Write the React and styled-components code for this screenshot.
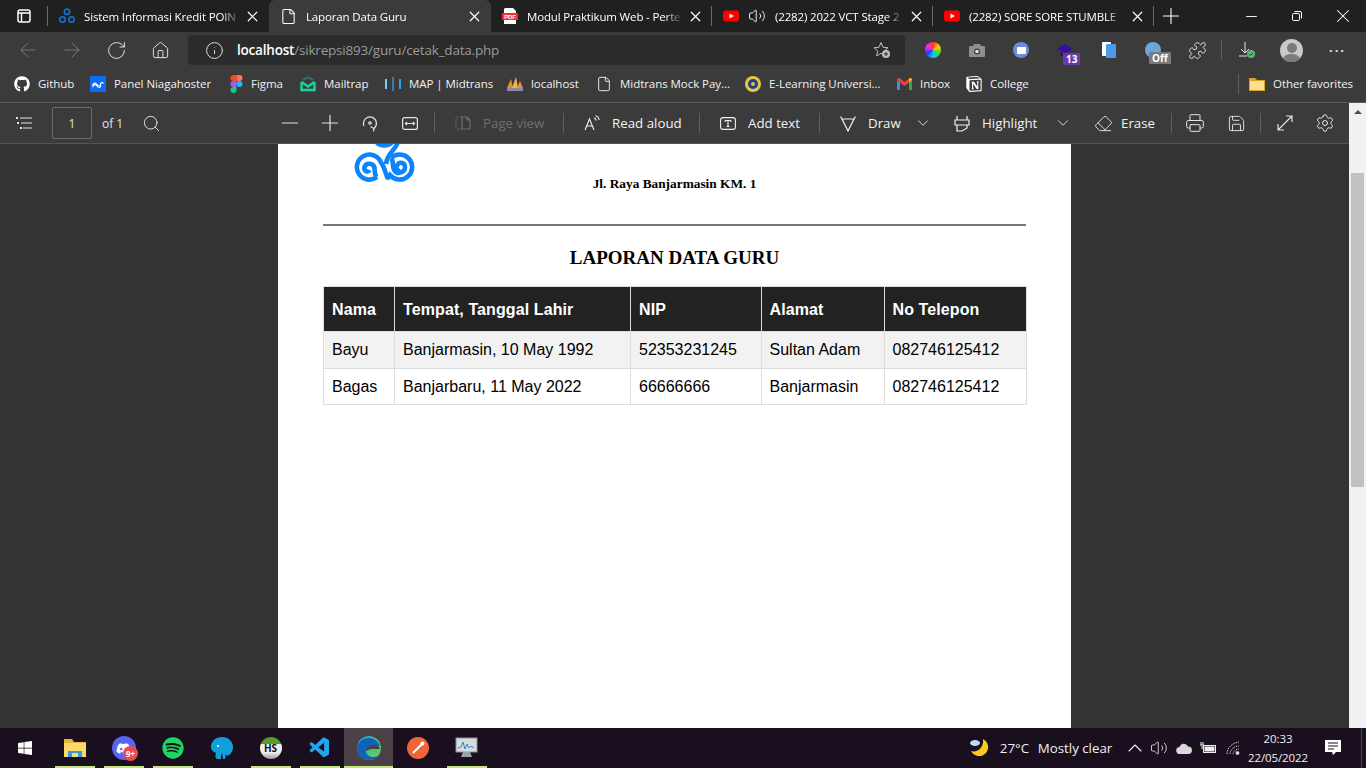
import React from 'react';
import styled, { createGlobalStyle } from 'styled-components';
import { FaGithub, FaDiscord, FaSpotify, FaWindows } from 'react-icons/fa';
import { SiNotion } from 'react-icons/si';
import { VscVscode } from 'react-icons/vsc';
import {
  ArrowLeft, ArrowRight, RotateCw, Home, Info, X, Plus, Minus, Search, Printer, Save, Settings,
  Eraser, Puzzle, ChevronDown, ChevronUp, File, Volume2,
} from 'lucide-react';

const GlobalStyle = createGlobalStyle`
  html, body { margin: 0; height: 100%; overflow: hidden; background: #333; }
  * { box-sizing: border-box; }
  body { font-family: "Open Sans", "Noto Sans", sans-serif; color: #fff; }
`;

const Screen = styled.div`
  width: 1366px;
  height: 768px;
  display: flex;
  flex-direction: column;
`;

/* ---- tab strip ---- */
const TabStrip = styled.div`
  height: 32px;
  flex: none;
  display: flex;
  background: #202020;
`;
const StripButton = styled.div`
  width: ${(p) => p.$w}px;
  flex: none;
  display: flex;
  align-items: center;
  justify-content: center;
  color: #fff;
`;
const WindowControls = styled.div`
  margin-left: auto;
  display: flex;
`;
const Tab = styled.div`
  width: ${(p) => p.$w}px;
  flex: none;
  display: flex;
  align-items: center;
  gap: 9px;
  padding: 0 8px 0 11px;
  font-size: 11.5px;
  letter-spacing: -0.15px;
  position: relative;
  background: ${(p) => (p.$active ? '#3b3b3b' : 'transparent')};
  border-radius: ${(p) => (p.$active ? '6px 6px 0 0' : '0')};
`;
const TabTitle = styled.span`
  flex: 1;
  min-width: 0;
  margin-right: -5px;
  overflow: hidden;
  white-space: nowrap;
  -webkit-mask-image: linear-gradient(to right, #000 calc(100% - 18px), transparent 100%);
  mask-image: linear-gradient(to right, #000 calc(100% - 18px), transparent 100%);
`;
const TabDivider = styled.span`
  position: absolute;
  right: 0;
  top: 6px;
  width: 1px;
  height: 20px;
  background: #6a6a6a;
`;
const StripSep = styled.div`
  width: 1px;
  height: 20px;
  margin-top: 6px;
  background: #6a6a6a;
  flex: none;
`;

/* ---- address toolbar ---- */
const AddressRow = styled.div`
  height: 36px;
  flex: none;
  display: flex;
  align-items: center;
  padding-left: 6px;
  background: #3b3b3b;
`;
const NavButton = styled.div`
  width: ${(p) => p.$w || 44}px;
  flex: none;
  display: flex;
  align-items: center;
  justify-content: center;
  color: ${(p) => (p.$dim ? '#777' : '#e6e6e6')};
  position: relative;
`;
const AddressBar = styled.div`
  width: 717px;
  height: 30px;
  margin: 0 6px;
  flex: none;
  display: flex;
  align-items: center;
  padding: 0 14px 0 17px;
  background: #2b2b2b;
  border-radius: 4px;
  font-size: 13.5px;
  letter-spacing: -0.2px;
  color: #e6e6e6;
`;
const Url = styled.div`
  margin-left: 13px;
  flex: 1;
  color: #9a9a9a;
  b { font-weight: 600; color: #fff; }
`;
const ToolSep = styled.div`
  width: 1px;
  height: 20px;
  flex: none;
  background: #5f5f5f;
  margin: 0 ${(p) => p.$r ?? 0}px 0 ${(p) => p.$l ?? 0}px;
`;
const Wheel = styled.div`
  width: 16px;
  height: 16px;
  border-radius: 50%;
  background: conic-gradient(#f33, #fc0, #3d3, #0cf, #33f, #e3e, #f33);
`;
const ExtCircle = styled.div`
  width: 16px;
  height: 16px;
  border-radius: 50%;
  background: ${(p) => p.$bg};
  display: flex;
  align-items: center;
  justify-content: center;
`;
const ExtGlyph = styled.div`
  width: 9px;
  height: 7px;
  background: #fff;
  border-radius: 1px;
`;
const CountBadge = styled.span`
  position: absolute;
  left: 20px;
  top: 9px;
  padding: 0 3px;
  height: 12px;
  line-height: 12px;
  font-size: 10px;
  font-weight: 700;
  border-radius: 1px;
  color: #fff;
  background: ${(p) => p.$bg};
`;
const OffBadge = styled(CountBadge)`
  left: 18px;
  top: 10px;
`;
const Avatar = styled.div`
  width: 23px;
  height: 23px;
  border-radius: 50%;
  background: #c9c9c9;
  overflow: hidden;
`;
const AvatarHead = styled.div`
  width: 10px;
  height: 10px;
  border-radius: 50%;
  background: #7b7b7b;
  margin: 4px auto 1px;
`;
const AvatarBody = styled.div`
  width: 17px;
  height: 10px;
  border-radius: 50%;
  background: #7b7b7b;
  margin: 0 auto;
`;
const MoreDots = styled.div`
  font-size: 13px;
  font-weight: 700;
  letter-spacing: 2px;
  line-height: 1;
  margin-top: -6px;
`;

/* ---- favorites bar ---- */
const FavBar = styled.div`
  height: 35px;
  flex: none;
  display: flex;
  align-items: center;
  padding: 0 0 3px 14px;
  background: #3b3b3b;
  border-bottom: 1px solid #5a5a5a;
`;
const Fav = styled.div`
  width: ${(p) => p.$w}px;
  flex: none;
  display: flex;
  align-items: center;
  gap: 8px;
  font-size: 11.5px;
  letter-spacing: -0.05px;
  white-space: nowrap;
  color: #f2f2f2;
`;
const FavEnd = styled.div`
  margin-left: auto;
  display: flex;
  align-items: center;
  gap: 10px;
`;

/* ---- main area ---- */
const Main = styled.div`
  flex: 1;
  min-height: 0;
  display: flex;
`;
const ViewerColumn = styled.div`
  flex: 1;
  min-width: 0;
  display: flex;
  flex-direction: column;
`;
const PdfBar = styled.div`
  height: 41px;
  flex: none;
  display: flex;
  align-items: center;
  padding-left: 4px;
  background: #3b3b3b;
  border-bottom: 1px solid #555;
  color: #e4e4e4;
`;
const PdfSlot = styled.div`
  width: ${(p) => p.$w}px;
  margin-left: ${(p) => p.$ml || 0}px;
  flex: none;
  display: flex;
  align-items: center;
  justify-content: center;
`;
const PageBox = styled.div`
  width: 40px;
  height: 32px;
  margin-left: 8px;
  flex: none;
  display: flex;
  align-items: center;
  justify-content: center;
  border: 1px solid #6c6c6c;
  border-radius: 2px;
  font-size: 12px;
`;
const PageCount = styled.div`
  width: 39px;
  flex: none;
  padding-left: 10px;
  font-size: 12px;
`;
const PdfAction = styled.div`
  width: ${(p) => p.$w}px;
  flex: none;
  display: flex;
  align-items: center;
  gap: ${(p) => p.$gap || 12}px;
  padding: 0 2px 0 20px;
  font-size: 13.3px;
  white-space: nowrap;
  color: ${(p) => (p.$dim ? '#6f6f6f' : '#f2f2f2')};
  svg { flex: none; }
`;
const ActionCaret = styled.span`
  margin-left: auto;
  display: flex;
`;
const Viewer = styled.div`
  flex: 1;
  min-height: 0;
  display: flex;
  justify-content: center;
  background: #333;
`;
const Sheet = styled.div`
  width: 793px;
  height: 100%;
  padding: 0 45px;
  background: #fff;
  color: #000;
  overflow: hidden;
`;
const SheetHeader = styled.div`
  display: grid;
  grid-template-columns: 1fr auto 1fr;
  align-items: end;
  height: 47px;
`;
const Logo = styled.svg`
  display: block;
  width: 64px;
  height: 38px;
  margin: 0 0 9px 30px;
`;
const Address = styled.div`
  font: 700 13.33px/14px "Liberation Serif", serif;
`;
const Rule = styled.hr`
  height: 2px;
  margin: 33px 0 0;
  border: 0;
  background: #777;
`;
const ReportTitle = styled.h1`
  margin: 21px 0 17px;
  text-align: center;
  font: 700 19px/22px "Liberation Serif", serif;
`;
const ReportTable = styled.table`
  width: 702.5px;
  border-collapse: collapse;
  table-layout: fixed;
  font: 16px/20px "Liberation Sans", Arial, sans-serif;
`;
const Th = styled.th`
  width: ${(p) => p.$w}px;
  height: 45px;
  padding: 2px 8px 0;
  text-align: left;
  font-weight: 700;
  letter-spacing: 0.1px;
  color: #fff;
  background: #222;
  border: 1px solid #ddd;
`;
const Row = styled.tr`
  background: ${(p) => (p.$shade ? '#f2f2f2' : '#fff')};
`;
const Td = styled.td`
  height: 36.5px;
  padding: ${(p) => (p.$low ? '2px' : '0')} 8px 0;
  border: 1px solid #ddd;
`;
const Scrollbar = styled.div`
  width: 17px;
  flex: none;
  background: #f1f1f1;
  padding: 0 2px;
`;
const ScrollArrow = styled.div`
  height: 70px;
  padding-top: 7px;
  display: flex;
  justify-content: center;
`;
const ArrowUp = styled.div`
  width: 0;
  height: 0;
  border-left: 4px solid transparent;
  border-right: 4px solid transparent;
  border-bottom: 4px solid #505050;
`;
const ScrollThumb = styled.div`
  height: 314px;
  background: #c1c1c1;
`;

/* ---- taskbar ---- */
const Taskbar = styled.div`
  height: 40px;
  flex: none;
  display: flex;
  align-items: stretch;
  background: #1a0f1e;
  color: #f0f0f0;
`;
const TaskSlot = styled.div`
  width: ${(p) => p.$w || 49}px;
  flex: none;
  display: flex;
  align-items: center;
  justify-content: center;
  position: relative;
  background: ${(p) => (p.$active ? '#4a4046' : 'transparent')};
  &::after {
    content: '';
    display: ${(p) => (p.$open ? 'block' : 'none')};
    position: absolute;
    bottom: 0;
    left: ${(p) => (p.$active ? 0 : 4.5)}px;
    right: ${(p) => (p.$active ? 0 : 4.5)}px;
    height: 2px;
    background: #c6e77e;
  }
`;
const DiscordDisc = styled.div`
  width: 24px;
  height: 24px;
  border-radius: 50%;
  background: #5865f2;
  display: flex;
  align-items: center;
  justify-content: center;
  color: #fff;
`;
const MentionBadge = styled.span`
  position: absolute;
  left: 24px;
  top: 18px;
  width: 15px;
  height: 15px;
  border-radius: 50%;
  background: #ec4a51;
  font-size: 8px;
  font-weight: 700;
  line-height: 15px;
  text-align: center;
  color: #fff;
`;
const HeidiDisc = styled.div`
  width: 22px;
  height: 22px;
  border-radius: 50%;
  background: linear-gradient(#5d9a2d 0 30%, #eee 30% 70%, #9a9a9a 100%);
  color: #111;
  font-size: 10px;
  font-weight: 700;
  line-height: 22px;
  text-align: center;
`;
const Tray = styled.div`
  margin-left: auto;
  display: flex;
  align-items: center;
  font-size: 13.3px;
`;
const TrayItem = styled.div`
  width: ${(p) => p.$w}px;
  padding-right: ${(p) => p.$pr || 0}px;
  flex: none;
  display: flex;
  align-items: center;
  justify-content: center;
  white-space: nowrap;
`;
const Clock = styled.div`
  width: 66px;
  flex: none;
  text-align: center;
  font-size: 11.5px;
  letter-spacing: -0.1px;
  line-height: 19px;
`;
const DesktopEdge = styled.div`
  width: 1px;
  height: 40px;
  margin: 0 4px 0 6px;
  background: #4a4046;
`;

const tabs = [
  { title: 'Sistem Informasi Kredit POIN', w: 221, icon: 'tri' },
  { title: 'Laporan Data Guru', w: 222, icon: 'doc', active: true },
  { title: 'Modul Praktikum Web - Perte', w: 221, icon: 'pdf', sep: true },
  { title: '(2282) 2022 VCT Stage 2', w: 221, icon: 'yt', audio: true, sep: true },
  { title: '(2282) SORE SORE STUMBLE', w: 221, icon: 'yt', sep: true },
];

const rows = [
  ['Bayu', 'Banjarmasin, 10 May 1992', '52353231245', 'Sultan Adam', '082746125412'],
  ['Bagas', 'Banjarbaru, 11 May 2022', '66666666', 'Banjarmasin', '082746125412'],
];

function TabIcon({ kind }) {
  if (kind === 'doc') return <File size={17} strokeWidth={1.5} />;
  if (kind === 'tri') return <TriIcon />;
  if (kind === 'pdf') return <PdfIcon />;
  return <YoutubeIcon />;
}

function TriIcon() {
  return (
    <svg width="16" height="16" viewBox="0 0 64 64" fill="none" stroke="#1274d6" strokeWidth="6">
      <circle cx="32" cy="15" r="11" />
      <circle cx="14" cy="46" r="11" />
      <circle cx="50" cy="46" r="11" />
      <path d="M32 15h1M14 46h1M50 46h1" />
    </svg>
  );
}
function PdfIcon() {
  return (
    <svg width="16" height="16" viewBox="0 0 16 16">
      <path d="M3 0h8l3 3v13H2V1z" fill="#fff" />
      <rect x="0" y="5" width="16" height="7" rx="1" fill="#f03030" />
      <text x="8" y="11" textAnchor="middle" fontSize="6" fontWeight="700" fill="#fff" fontFamily="Liberation Sans">PDF</text>
    </svg>
  );
}
function YoutubeIcon() {
  return (
    <svg width="16" height="16" viewBox="0 0 16 16">
      <rect y="2.5" width="16" height="11" rx="3" fill="#f00" />
      <path d="M6.5 5.5v5L11 8z" fill="#fff" />
    </svg>
  );
}
function NiagaIcon() {
  return (
    <svg width="16" height="16" viewBox="0 0 16 16" fill="none">
      <rect width="16" height="16" rx="1" fill="#0d6cf2" />
      <path d="M2.5 9.5c1.5-3 3-3 4.5-1s3 2 3.5 0 2-2.5 3-1M2.5 11c1.5-3 3-3 4.5-1s3 2 4 0" stroke="#fff" strokeWidth="1.2" />
    </svg>
  );
}
function FigmaIcon() {
  return (
    <svg width="13" height="18" viewBox="-.5 0 13 18">
      <path d="M6 0H3a3 3 0 0 0 0 6h3z" fill="#f24e1e" />
      <path d="M6 0h3a3 3 0 0 1 0 6H6z" fill="#ff7262" />
      <path d="M6 6H3a3 3 0 0 0 0 6h3z" fill="#a259ff" />
      <circle cx="9" cy="9" r="3" fill="#1abcfe" />
      <path d="M6 12H3a3 3 0 1 0 3 3z" fill="#0acf83" />
    </svg>
  );
}
function MailtrapIcon() {
  return (
    <svg width="16" height="16" viewBox="0 0 16 16" fill="none" strokeWidth="2.4">
      <path d="M1.5 6v8h13V6" stroke="#16d6a0" />
      <path d="M1.5 6 8 10.5 14.5 6" stroke="#16d6a0" />
      <path d="M2.5 4 8 1.5 13.5 4" stroke="#3d6470" />
    </svg>
  );
}
function BarsIcon() {
  return (
    <svg width="16" height="16" viewBox="0 0 16 16">
      <rect x="0" y="3" width="2" height="10" fill="#8cc8ec" />
      <rect x="7" y="1" width="2" height="14" fill="#2a7fc0" />
      <rect x="14" y="3" width="2" height="10" fill="#35a5e0" />
    </svg>
  );
}
function PmaIcon() {
  return (
    <svg width="16" height="16" viewBox="0 0 16 16">
      <path d="M0 12 4 3l2 9z" fill="#e8902a" />
      <path d="M5 12 9 1l2 11z" fill="#f2b544" />
      <path d="M10 12l3-7 3 7z" fill="#e8902a" />
      <rect x="0" y="12" width="16" height="3" fill="#8a8aa8" />
    </svg>
  );
}
function CampusIcon() {
  return (
    <svg width="16" height="16" viewBox="0 0 16 16">
      <circle cx="8" cy="8" r="8" fill="#e2c54a" />
      <circle cx="8" cy="8" r="5" fill="#25407a" />
      <circle cx="8" cy="8" r="2" fill="#d8c060" />
    </svg>
  );
}
function GmailIcon() {
  return (
    <svg width="15" height="12" viewBox="0 0 15 12">
      <path d="M0 2v10h3V4.5z" fill="#4285f4" />
      <path d="M15 2v10h-3V4.5z" fill="#34a853" />
      <path d="M0 2c0-2 2-2.5 3-1.5L7.5 4 12 .5c1-1 3-.5 3 1.5L12 4.5 7.5 8 3 4.5z" fill="#ea4335" />
      <path d="M12 .5c1-1 3-.5 3 1.5L12 4.5z" fill="#fbbc04" />
    </svg>
  );
}
function FolderIcon() {
  return (
    <svg width="16" height="14" viewBox="0 0 16 14">
      <path d="M0 1h6l2 2h8v11H0z" fill="#d9a520" />
      <rect x="1" y="4" width="14" height="9" fill="#fbe08c" />
    </svg>
  );
}
function PanelIcon() {
  return (
    <svg width="14" height="14" viewBox="0 0 14 14" fill="none" stroke="#fff" strokeWidth="1.5">
      <rect x="1" y="1" width="12" height="12" rx="2" />
      <path d="M1 4h12M4.5 4v9" />
    </svg>
  );
}
function RestoreIcon() {
  return (
    <svg width="10" height="10" viewBox="0 0 10 10" fill="none" stroke="#fff">
      <rect x=".5" y="2.5" width="7" height="7" rx="1" />
      <path d="M2.5 .5H8a1.5 1.5 0 0 1 1.5 1.5v5.5" />
    </svg>
  );
}
function StarAdd() {
  return (
    <svg width="18" height="18" viewBox="0 0 18 18" fill="none">
      <path d="M8 1.5 10 6.3l5 .4-3.8 3.3 1.2 5-4.4-2.7-4.4 2.7 1.2-5L1 6.7l5-.4z" stroke="#bdbdbd" />
      <circle cx="13" cy="13" r="4" fill="#bdbdbd" />
      <path d="M13 11v4M11 13h4" stroke="#2b2b2b" />
    </svg>
  );
}
function CameraIcon() {
  return (
    <svg width="16" height="15" viewBox="0 0 16 15">
      <path d="M5 1h6l1 2h3a1 1 0 0 1 1 1v9a1 1 0 0 1-1 1H1a1 1 0 0 1-1-1V4a1 1 0 0 1 1-1h3z" fill="#8f8f8f" />
      <circle cx="8" cy="8.5" r="3" fill="#3b3b3b" />
      <circle cx="8" cy="8.5" r="1.8" fill="#e6e6e6" />
    </svg>
  );
}
function ListIcon() {
  return (
    <svg width="16" height="12" viewBox="0 0 16 12" fill="#e4e4e4">
      <rect width="2" height="2" />
      <rect x="4" y=".5" width="12" height="1" />
      <rect x="1" y="5" width="2" height="2" />
      <rect x="5" y="5.5" width="11" height="1" />
      <rect x="4" y="10" width="2" height="2" />
      <rect x="7" y="10.5" width="9" height="1" />
    </svg>
  );
}
function RotateIcon() {
  return (
    <svg width="16" height="17" viewBox="0 0 16 17" fill="none" stroke="#e4e4e4" strokeWidth="1.2">
      <path d="M2 11A6.5 6.5 0 1 1 12 13.5" />
      <path d="M8.5 11.5 12 13.5 11.5 16.5" />
      <circle cx="8" cy="8" r="1.2" />
    </svg>
  );
}
function FitIcon() {
  return (
    <svg width="16" height="13" viewBox="0 0 16 13" fill="none" stroke="#e4e4e4" strokeWidth="1.2">
      <rect x=".6" y=".6" width="14.8" height="11.8" rx="2" />
      <path d="M3.5 6.5h9M5 5 3.5 6.5 5 8M11 5l1.5 1.5L11 8" />
    </svg>
  );
}
function PageViewIcon() {
  return (
    <svg width="16" height="16" viewBox="0 0 16 16" fill="none" stroke="#6f6f6f" strokeWidth="1.1">
      <path d="M7 2H2.5A1.5 1.5 0 0 0 1 3.5v9A1.5 1.5 0 0 0 2.5 14H7" strokeDasharray="2 1.5" />
      <path d="M7 2h5l3 3v9H7zM12 2v3h3" />
    </svg>
  );
}
function ReadAloudIcon() {
  return (
    <svg width="16" height="16" viewBox="0 0 16 16" fill="none" stroke="#f2f2f2" strokeWidth="1.1">
      <path d="M1 15 5.5 4 10 15M2.5 11h6" />
      <path d="M10 3c1.3.4 2 1.3 2.4 2.6M11.5 .8c2 .6 3.3 2 3.8 4" />
    </svg>
  );
}
function AddTextIcon() {
  return (
    <svg width="16" height="13" viewBox="0 0 16 13" fill="none" stroke="#f2f2f2" strokeWidth="1.1">
      <rect x=".6" y=".6" width="14.8" height="11.8" rx="2.5" />
      <path d="M5 3.5h6M8 3.5v6M6.5 9.5h3M5 3.5V5M11 3.5V5" />
    </svg>
  );
}
function DrawIcon() {
  return (
    <svg width="16" height="17" viewBox="0 0 16 17" fill="none" stroke="#f2f2f2" strokeWidth="1.2">
      <path d="M.5 1.5 2 4h12l1.500-2.5M2 4l6 12 6-12" />
    </svg>
  );
}
function HighlightIcon() {
  return (
    <svg width="16" height="17" viewBox="0 0 16 17" fill="none" stroke="#f2f2f2" strokeWidth="1.2">
      <path d="M3 1v4h10V1M1 5h14v5H1zM3 10v6h5l5-3v-3" />
    </svg>
  );
}
function ExpandIcon() {
  return (
    <svg width="16" height="16" viewBox="0 0 16 16" fill="none" stroke="#e4e4e4" strokeWidth="1.2">
      <path d="M1 15 15 1M9 1h6v6M1 9v6h6" />
    </svg>
  );
}
function CapIcon() {
  return (
    <svg width="16" height="13" viewBox="0 0 16 13">
      <path d="M8 0 16 5 8 9 0 5z" fill="#3a0ca3" />
      <path d="M3 8v3l5 2 5-2V8L8 10.5z" fill="#2f0a8a" />
    </svg>
  );
}
function CopyIcon() {
  return (
    <svg width="14" height="16" viewBox="0 0 14 16">
      <rect x="0" y="0" width="9" height="14" rx="1" fill="#fff" />
      <rect x="4" y="2" width="10" height="14" rx="1" fill="#4d9be8" />
    </svg>
  );
}
function DownloadDone() {
  return (
    <svg width="18" height="18" viewBox="0 0 18 18" fill="none">
      <path d="M7 1v11M3 8l4 4 4-4M1 15h8" stroke="#e6e6e6" />
      <circle cx="13" cy="13" r="4" fill="#5fb37a" />
      <path d="m11 13 1.5 1.5L15 12" stroke="#243" />
    </svg>
  );
}
function ExplorerIcon() {
  return (
    <svg width="22" height="18" viewBox="0 0 22 18">
      <path d="M0 0h8l2 3h12v15H0z" fill="#e8b53a" />
      <rect y="4" width="22" height="14" fill="#fbd96a" />
      <rect x="4" y="12" width="14" height="6" fill="#3a9ad9" />
      <rect x="8" y="14" width="6" height="4" fill="#fbd96a" />
    </svg>
  );
}
function ElephantIcon() {
  return (
    <svg width="24" height="24" viewBox="0 0 24 24">
      <path d="M12 1c6 0 11 4 11 10 0 5-3 8-6 9l-1-2-1 5h-2l-1-6c-1 2-1 4-1 6H7c-2-1-2-4-1-6C3 16 1 14 1 11 1 5 6 1 12 1z" fill="#0f9fdd" />
      <circle cx="8" cy="10" r="1" fill="#fff" />
    </svg>
  );
}
function EdgeIcon() {
  return (
    <svg width="24" height="24" viewBox="0 0 24 24">
      <defs>
        <linearGradient id="edgeTop" x1="0" y1="0" x2="1" y2="1">
          <stop offset="0" stopColor="#1aa5d8" />
          <stop offset="1" stopColor="#6fd44a" />
        </linearGradient>
      </defs>
      <circle cx="12" cy="12" r="12" fill="url(#edgeTop)" />
      <path d="M0 13C0 20 6 24 12 24c4 0 7-1 9-4-5 2-11 1-12-4-1-3 2-6 6-6h8C21 5 17 2 12 2 5 2 0 7 0 13z" fill="#0f62b8" />
      <path d="M9 15c0-4 4-6 8-6 3 0 6 2 6 4H15c-3 0-5 2-6 2z" fill="#4a4046" />
    </svg>
  );
}
function PostmanIcon() {
  return (
    <svg width="22" height="22" viewBox="0 0 22 22">
      <circle cx="11" cy="11" r="11" fill="#f0643a" />
      <path d="M6 16 15 7" stroke="#fff" strokeWidth="2" />
      <circle cx="15.5" cy="6.5" r="2" fill="#fff" />
    </svg>
  );
}
function MonitorIcon() {
  return (
    <svg width="23" height="22" viewBox="0 0 23 22">
      <rect x="1" y="1" width="21" height="14" fill="#d6dde0" stroke="#8a9498" />
      <path d="M3 11l3-1 2-5 2 7 2-5 2 4 2-2 3 2" fill="none" stroke="#3a86c8" />
      <path d="M8 15h7l2 5H6z" fill="#9aa2a6" />
    </svg>
  );
}
function MoonIcon() {
  return (
    <svg width="20" height="20" viewBox="0 0 20 20">
      <path d="M13 1a9 9 0 1 1-12 12C8 15 14 9 13 1z" fill="#fbc91e" />
      <ellipse cx="5" cy="5" rx="5" ry="3" fill="#bcdcf2" />
    </svg>
  );
}
function CloudIcon() {
  return (
    <svg width="16" height="11" viewBox="0 0 16 11">
      <path d="M4 11a3.5 3.5 0 0 1-.5-7A4.5 4.5 0 0 1 12 3.5 3.8 3.8 0 0 1 13 11z" fill="#d8d8d8" />
    </svg>
  );
}
function BatteryIcon() {
  return (
    <svg width="16" height="12" viewBox="0 0 16 12" fill="none" stroke="#eee">
      <rect x="3.5" y="3.5" width="12" height="7" />
      <rect x="5" y="5" width="9" height="4" fill="#eee" />
      <path d="M1 0v3M3 0v3M0 3h4M2 4v3" />
    </svg>
  );
}
function WifiIcon() {
  return (
    <svg width="14" height="14" viewBox="0 0 14 14" fill="none" stroke="#cfcfcf">
      <path d="M1 13C1 7 6 2 13 1M4 13c0-4 4-8 9-8M7 13c0-2 3-5 6-5" strokeDasharray="1.5 1" />
      <circle cx="11.5" cy="12" r="1.5" fill="#eee" />
    </svg>
  );
}
function NotifyIcon() {
  return (
    <svg width="16" height="16" viewBox="0 0 16 16">
      <path d="M0 0h16v12h-5l-3 3-1-3H0z" fill="#fff" />
      <path d="M3 3h10M3 6h10M3 9h6" stroke="#1a0f1e" />
    </svg>
  );
}

const favorites = [
  { label: 'Github', w: 76, icon: <FaGithub size={16} color="#fff" /> },
  { label: 'Panel Niagahoster', w: 140, icon: <NiagaIcon /> },
  { label: 'Figma', w: 70, icon: <FigmaIcon /> },
  { label: 'Mailtrap', w: 85, icon: <MailtrapIcon /> },
  { label: 'MAP | Midtrans', w: 122, icon: <BarsIcon /> },
  { label: 'localhost', w: 89, icon: <PmaIcon /> },
  { label: 'Midtrans Mock Pay...', w: 149, icon: <File size={16} strokeWidth={1.4} /> },
  { label: 'E-Learning Universi...', w: 152, icon: <CampusIcon /> },
  { label: 'Inbox', w: 69, icon: <GmailIcon /> },
  { label: 'College', w: 70, icon: <SiNotion size={16} color="#fff" /> },
];

function App() {
  return (
    <Screen>
      <GlobalStyle />

      <TabStrip>
        <StripButton $w={47}><PanelIcon /></StripButton>
        <StripSep />
        {tabs.map((tab) => (
          <Tab key={tab.title} $w={tab.w} $active={tab.active}>
            <TabIcon kind={tab.icon} />
            {tab.audio && <Volume2 size={18} strokeWidth={1.2} />}
            <TabTitle>{tab.title}</TabTitle>
            <X size={17} strokeWidth={1.7} />
            {tab.sep && <TabDivider />}
          </Tab>
        ))}
        <StripButton $w={34}><Plus size={26} strokeWidth={1} /></StripButton>
        <WindowControls>
          <StripButton $w={46}><Minus size={17} strokeWidth={1.3} /></StripButton>
          <StripButton $w={46}><RestoreIcon /></StripButton>
          <StripButton $w={46}><X size={22} strokeWidth={1.1} /></StripButton>
        </WindowControls>
      </TabStrip>

      <AddressRow>
        <NavButton $dim><ArrowLeft size={24} strokeWidth={1} /></NavButton>
        <NavButton $dim><ArrowRight size={24} strokeWidth={1} /></NavButton>
        <NavButton><RotateCw size={21} strokeWidth={1.1} /></NavButton>
        <NavButton><Home size={19} strokeWidth={1.2} /></NavButton>
        <AddressBar>
          <Info size={19} strokeWidth={1.2} />
          <Url><b>localhost</b>/sikrepsi893/guru/cetak_data.php</Url>
          <StarAdd />
        </AddressBar>
        <NavButton><Wheel /></NavButton>
        <NavButton><CameraIcon /></NavButton>
        <NavButton><ExtCircle $bg="#6f8bd8"><ExtGlyph /></ExtCircle></NavButton>
        <NavButton><CapIcon /><CountBadge $bg="#6a3ab2">13</CountBadge></NavButton>
        <NavButton><CopyIcon /></NavButton>
        <NavButton><ExtCircle $bg="#6aa8dc" /><OffBadge $bg="#7a7a7a">Off</OffBadge></NavButton>
        <NavButton><Puzzle size={19} strokeWidth={1.2} /></NavButton>
        <ToolSep $l={2} $r={3} />
        <NavButton><DownloadDone /></NavButton>
        <NavButton $w={45}><Avatar><AvatarHead /><AvatarBody /></Avatar></NavButton>
        <NavButton $w={47}><MoreDots>...</MoreDots></NavButton>
      </AddressRow>

      <FavBar>
        {favorites.map((fav) => (
          <Fav key={fav.label} $w={fav.w}>{fav.icon}{fav.label}</Fav>
        ))}
        <FavEnd>
          <ToolSep />
          <Fav $w={117}><FolderIcon />Other favorites</Fav>
        </FavEnd>
      </FavBar>

      <Main>
        <ViewerColumn>
          <PdfBar>
            <PdfSlot $w={40}><ListIcon /></PdfSlot>
            <PageBox>1</PageBox>
            <PageCount>of 1</PageCount>
            <PdfSlot $w={40}><Search size={19} strokeWidth={1.2} /></PdfSlot>
            <PdfSlot $w={40} $ml={99}><Minus size={26} strokeWidth={1.1} /></PdfSlot>
            <PdfSlot $w={40}><Plus size={26} strokeWidth={1.1} /></PdfSlot>
            <PdfSlot $w={40}><RotateIcon /></PdfSlot>
            <PdfSlot $w={40}><FitIcon /></PdfSlot>
            <ToolSep $l={4} />
            <PdfAction $w={128} $dim><PageViewIcon />Page view</PdfAction>
            <ToolSep />
            <PdfAction $w={135}><ReadAloudIcon />Read aloud</PdfAction>
            <ToolSep />
            <PdfAction $w={119}><AddTextIcon />Add text</PdfAction>
            <ToolSep />
            <PdfAction $w={114}><DrawIcon />Draw<ActionCaret><ChevronDown size={18} strokeWidth={1.1} /></ActionCaret></PdfAction>
            <PdfAction $w={140}><HighlightIcon />Highlight<ActionCaret><ChevronDown size={18} strokeWidth={1.1} /></ActionCaret></PdfAction>
            <PdfAction $w={97} $gap={8}><Eraser size={19} strokeWidth={1.1} />Erase</PdfAction>
            <ToolSep />
            <PdfSlot $w={46}><Printer size={20} strokeWidth={1.2} /></PdfSlot>
            <PdfSlot $w={36}><Save size={19} strokeWidth={1.2} /></PdfSlot>
            <ToolSep $l={6} />
            <PdfSlot $w={48}><ExpandIcon /></PdfSlot>
            <PdfSlot $w={32}><Settings size={20} strokeWidth={1.2} /></PdfSlot>
          </PdfBar>
          <Viewer>
            <Sheet>
              <SheetHeader>
                <Logo viewBox="0 0 64 38" fill="none" stroke="#0d84fb" strokeWidth="4.6">
                  <path d="M24 33A12.5 12.5 0 1 1 28 18.5C31 22 32 28 35 35" />
                  <path d="M24 33C21 31 22 27 21.5 24C21 19 13 18 11.5 23C10.5 27 15 29 16.5 26" />
                  <path d="M38 14A12.5 12.5 0 1 1 37 31L34 35" />
                  <path d="M38 14C41 17 39 22 41 26C43 31 52 29 52 23C52 18 45 17 44 22C43.5 25 46 26 47 25" />
                  <path d="M45 -2C42 7 34 9 33 20" />
                  <path d="M23 -3C26 3 36 3 40 -3" />
                </Logo>
                <Address>Jl. Raya Banjarmasin KM. 1</Address>
              </SheetHeader>
              <Rule />
              <ReportTitle>LAPORAN DATA GURU</ReportTitle>
              <ReportTable>
                <thead>
                  <tr>
                    <Th $w={71}>Nama</Th>
                    <Th $w={236}>Tempat, Tanggal Lahir</Th>
                    <Th $w={130.5}>NIP</Th>
                    <Th $w={123}>Alamat</Th>
                    <Th $w={142}>No Telepon</Th>
                  </tr>
                </thead>
                <tbody>
                  {rows.map((row, i) => (
                    <Row key={row[0]} $shade={i === 0}>
                      {row.map((cell) => <Td key={cell} $low={i === 1}>{cell}</Td>)}
                    </Row>
                  ))}
                </tbody>
              </ReportTable>
            </Sheet>
          </Viewer>
        </ViewerColumn>
        <Scrollbar>
          <ScrollArrow><ArrowUp /></ScrollArrow>
          <ScrollThumb />
        </Scrollbar>
      </Main>

      <Taskbar>
        <TaskSlot $w={50}><FaWindows size={16} color="#fff" /></TaskSlot>
        <TaskSlot $open><ExplorerIcon /></TaskSlot>
        <TaskSlot $open><DiscordDisc><FaDiscord size={15} /></DiscordDisc><MentionBadge>9+</MentionBadge></TaskSlot>
        <TaskSlot $open><FaSpotify size={22} color="#1ed760" /></TaskSlot>
        <TaskSlot><ElephantIcon /></TaskSlot>
        <TaskSlot $open><HeidiDisc>HS</HeidiDisc></TaskSlot>
        <TaskSlot $open><VscVscode size={24} color="#23a5ee" /></TaskSlot>
        <TaskSlot $open $active><EdgeIcon /></TaskSlot>
        <TaskSlot><PostmanIcon /></TaskSlot>
        <TaskSlot $open><MonitorIcon /></TaskSlot>
        <Tray>
          <TrayItem $w={32} $pr={3}><MoonIcon /></TrayItem>
          <TrayItem $w={38} $pr={3}>27°C</TrayItem>
          <TrayItem $w={88} $pr={8}>Mostly clear</TrayItem>
          <TrayItem $w={24}><ChevronUp size={24} strokeWidth={1.1} /></TrayItem>
          <TrayItem $w={24}><Volume2 size={18} strokeWidth={1.1} /></TrayItem>
          <TrayItem $w={25}><CloudIcon /></TrayItem>
          <TrayItem $w={24}><BatteryIcon /></TrayItem>
          <TrayItem $w={25}><WifiIcon /></TrayItem>
          <Clock>20:33<br />22/05/2022</Clock>
          <TrayItem $w={44}><NotifyIcon /></TrayItem>
          <DesktopEdge />
        </Tray>
      </Taskbar>
    </Screen>
  );
}

export default App;
